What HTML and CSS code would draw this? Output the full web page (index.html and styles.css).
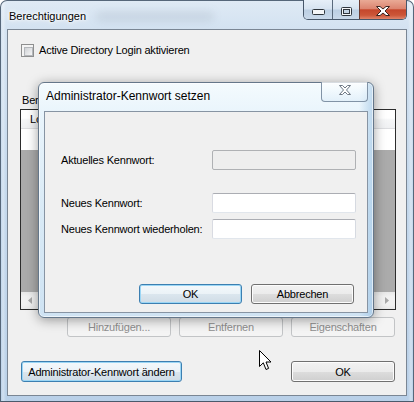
FILE: index.html
```html
<!DOCTYPE html>
<html lang="de">
<head>
<meta charset="utf-8">
<title>Berechtigungen</title>
<link rel="stylesheet" href="styles.css">
</head>
<body>
<div class="screen">
  <div class="window">
    <div class="titlebar">
      <span class="title">Berechtigungen</span>
      <span class="glass-blur"></span>
      <div class="caption">
        <div class="cbtn cbtn-min">
          <svg width="13" height="6" viewBox="0 0 13 6"><rect x="0.5" y="0.5" width="12" height="5" rx="1" fill="#f4f6f8" stroke="#2f363d"/></svg>
        </div>
        <div class="cbtn cbtn-max">
          <svg width="11" height="9" viewBox="0 0 11 9"><rect x="0.5" y="0.5" width="10" height="8" rx="1" fill="#f4f6f8" stroke="#2f363d"/><rect x="2.5" y="2.5" width="6" height="4" fill="#c3d3e4" stroke="#2f363d"/></svg>
        </div>
        <div class="cbtn cbtn-close">
          <svg width="14" height="10" viewBox="0 0 14 10"><polygon points="0.5,0.5 4,0.5 7,3 10,0.5 13.5,0.5 9,5 13.5,9.5 10,9.5 7,7 4,9.5 0.5,9.5 5,5" fill="#fff" stroke="#3b2520" stroke-linejoin="round"/></svg>
        </div>
      </div>
    </div>
    <div class="client">
      <div class="check-row">
        <span class="checkbox"></span>
        <span class="check-label">Active Directory Login aktivieren</span>
      </div>
      <div class="group-label">Berechtigungen:</div>
      <div class="listview">
        <div class="lv-header"><span>Login</span></div>
        <div class="lv-row"></div>
        <div class="lv-empty"></div>
        <div class="hscroll">
          <span class="sb-btn"><svg width="4" height="7" viewBox="0 0 4 7"><path d="M4 0 L0 3.5 L4 7 Z" fill="#a9a9a9"/></svg></span>
          <span class="sb-btn"><svg width="4" height="7" viewBox="0 0 4 7"><path d="M0 0 L4 3.5 L0 7 Z" fill="#a9a9a9"/></svg></span>
        </div>
      </div>
      <div class="button-row">
        <div class="btn btn-disabled">Hinzufügen...</div>
        <div class="btn btn-disabled">Entfernen</div>
        <div class="btn btn-disabled">Eigenschaften</div>
      </div>
      <div class="bottom-row">
        <div class="btn btn-default btn-wide">Administrator-Kennwort ändern</div>
        <div class="btn btn-main">OK</div>
      </div>
    </div>
  </div>

  <div class="dialog">
    <div class="dlg-titlebar">
      <span class="dlg-title">Administrator-Kennwort setzen</span>
      <div class="dlg-close">
        <svg width="12" height="10" viewBox="0 0 12 10"><polygon points="0.5,0.5 3.5,0.5 6,3 8.5,0.5 11.5,0.5 7.5,5 11.5,9.5 8.5,9.5 6,7 3.5,9.5 0.5,9.5 4.5,5" fill="#fff" stroke="#6e7884" stroke-linejoin="round"/></svg>
      </div>
    </div>
    <div class="dlg-client">
      <div class="form">
        <div class="form-row row-first">
          <span class="form-label">Aktuelles Kennwort:</span>
          <span class="field field-disabled"></span>
        </div>
        <div class="form-row row-second">
          <span class="form-label">Neues Kennwort:</span>
          <span class="field"></span>
        </div>
        <div class="form-row">
          <span class="form-label">Neues Kennwort wiederholen:</span>
          <span class="field"></span>
        </div>
      </div>
      <div class="dlg-buttons">
        <div class="btn btn-default btn-dlg">OK</div>
        <div class="btn btn-dlg">Abbrechen</div>
      </div>
    </div>
  </div>

  <svg class="cursor" width="13" height="21" viewBox="0 0 13 21"><polygon points="0.5,0.5 0.5,16.5 4.3,12.8 7,19.5 9.6,18.4 7,12 12,12" fill="#fff" stroke="#000" stroke-linejoin="round"/></svg>
</div>
</body>
</html>
```

FILE: styles.css
```css
* { box-sizing: border-box; }

html, body {
  margin: 0;
  padding: 0;
}

body {
  background: #ffffff;
  font-family: "Liberation Sans", Arial, sans-serif;
  font-size: 11px;
  letter-spacing: -0.2px;
  color: #000;
  overflow: hidden;
}

.screen {
  position: relative;
  width: 414px;
  height: 402px;
  overflow: hidden;
}

/* ---------- main window ---------- */
.window {
  width: 414px;
  height: 402px;
  border: 1px solid #56677a;
  border-bottom-color: #4a5a6b;
  border-radius: 7px 7px 0 0;
  padding: 0 6px 5px 6px;
  display: flex;
  flex-direction: column;
  background:
    linear-gradient(90deg, rgba(255,255,255,0) 0, rgba(255,255,255,.35) 2px, rgba(255,255,255,0) 5px),
    linear-gradient(270deg, rgba(255,255,255,0) 0, rgba(255,255,255,.35) 2px, rgba(255,255,255,0) 5px),
    linear-gradient(180deg, #dfeaf5 0, #d3e2f1 28px, #c4d8ec 45%, #b9d0e8 100%);
}

.titlebar {
  height: 28px;
  display: flex;
  align-items: flex-start;
  flex-shrink: 0;
}

.title {
  margin-top: 8px;
  padding-left: 2px;
  line-height: 14px;
  font-size: 11px;
  letter-spacing: 0;
  color: #000;
  text-shadow: 0 0 7px #fff, 0 0 4px #fff, 0 0 2px #fff;
}

.glass-blur {
  width: 118px;
  height: 9px;
  margin: 11px 0 0 10px;
  border-radius: 5px;
  background: rgba(80, 92, 108, .13);
  filter: blur(4px);
}

.caption {
  margin-left: auto;
  margin-top: -1px;
  display: flex;
  height: 20px;
  border: 1px solid #47576a;
  border-top: 0;
  border-radius: 0 0 5px 5px;
  overflow: hidden;
}

.cbtn {
  height: 19px;
  display: flex;
  justify-content: center;
}

.cbtn-min {
  width: 28px;
  align-items: flex-end;
  padding-bottom: 4px;
  background: linear-gradient(180deg, #e6eff8 0%, #d6e3f0 48%, #bccfe3 52%, #c9d9ea 100%);
}

.cbtn-max {
  width: 27px;
  border-left: 1px solid #5a6a7c;
  align-items: flex-start;
  padding-top: 7px;
  background: linear-gradient(180deg, #e6eff8 0%, #d6e3f0 48%, #bccfe3 52%, #c9d9ea 100%);
}

.cbtn-close {
  width: 47px;
  border-left: 1px solid #6b3a30;
  align-items: flex-start;
  padding-top: 6px;
  background: linear-gradient(180deg, #e9aa96 0%, #dc8570 45%, #c5472c 52%, #cc5638 80%, #e0846a 100%);
}

.client {
  height: 367px;
  flex-shrink: 0;
  border: 1px solid #7a8694;
  background: #f0f0f0;
  display: flex;
  flex-direction: column;
}

.check-row {
  display: flex;
  align-items: center;
  gap: 5px;
  height: 13px;
  margin: 14px 0 0 13px;
  line-height: 13px;
}

.checkbox {
  width: 13px;
  height: 13px;
  flex-shrink: 0;
  border: 1px solid #8e8f8f;
  background: #f4f4f4;
  padding: 2px;
}

.checkbox::before {
  content: "";
  display: block;
  width: 100%;
  height: 100%;
  border: 1px solid #b4b7bb;
  background: linear-gradient(135deg, #cfd2d6 0%, #e6e7e9 60%, #f6f6f6 100%);
}

.group-label {
  margin: 36px 0 0 14px;
  line-height: 14px;
}

.listview {
  width: 376px;
  height: 201px;
  margin: 2px 0 0 12px;
  border: 1px solid #2c2c2c;
  background: #fff;
  display: flex;
  flex-direction: column;
}

.lv-header {
  height: 19px;
  line-height: 18px;
  padding-left: 9px;
  border-bottom: 1px solid #dcdde0;
  background: linear-gradient(180deg, #ffffff 0%, #ffffff 45%, #f5f6f7 55%, #eff0f2 100%);
}

.lv-row {
  height: 21px;
  background: #fff;
}

.lv-empty {
  flex: 1;
  background: #ababab;
}

.hscroll {
  height: 17px;
  display: flex;
  justify-content: space-between;
  background: linear-gradient(180deg, #e7e7e7 0%, #f1f1f1 25%, #f1f1f1 75%, #e9e9e9 100%);
}

.sb-btn {
  width: 17px;
  height: 17px;
  display: flex;
  align-items: center;
  justify-content: center;
}

.button-row {
  display: flex;
  justify-content: flex-end;
  gap: 8px;
  margin: 7px 11px 0 0;
}

.bottom-row {
  display: flex;
  justify-content: space-between;
  margin: 24px 11px 0 13px;
}

/* ---------- buttons ---------- */
.btn {
  height: 21px;
  width: 104px;
  display: flex;
  align-items: center;
  justify-content: center;
  border: 1px solid #707070;
  border-radius: 3px;
  background: linear-gradient(180deg, #f2f2f2 0%, #ebebeb 50%, #dddddd 51%, #cfcfcf 100%);
  box-shadow: inset 0 0 0 1px #fcfcfc;
  white-space: nowrap;
}

.button-row .btn {
  height: 20px;
}

.btn-disabled {
  border-color: #c2c4c6;
  background: #f4f4f4;
  box-shadow: none;
  color: #8f8f8f;
}

.btn-default {
  border-color: #3c7fb1;
  background: linear-gradient(180deg, #f3f8fb 0%, #ebf2f7 50%, #dbe6ee 51%, #d0dce6 100%);
  box-shadow: inset 0 0 0 1px #9bd6f5;
}

.btn-wide {
  width: 161px;
}

.btn-dlg {
  width: 103px;
  height: 20px;
}

/* ---------- dialog ---------- */
.dialog {
  position: absolute;
  left: 38px;
  top: 82px;
  width: 336px;
  height: 236px;
  border: 1px solid #65778a;
  border-radius: 6px;
  padding: 0 5px 4px 5px;
  display: flex;
  flex-direction: column;
  background:
    linear-gradient(90deg, rgba(150,190,225,0) 0, rgba(150,190,225,0) 320px, rgba(130,178,220,.45) 334px),
    linear-gradient(180deg, #f4fbfe 0, #eaf5fc 28px, #d9eaf6 55%, #cfe3f3 100%);
  box-shadow: 0 2px 12px rgba(0, 0, 0, .38), inset 0 0 0 1px rgba(255,255,255,.6);
}

.dlg-titlebar {
  height: 28px;
  flex-shrink: 0;
  display: flex;
  align-items: flex-start;
}

.dlg-title {
  margin-top: 6px;
  padding-left: 2px;
  font-size: 12px;
  line-height: 15px;
  letter-spacing: 0;
  text-shadow: 0 0 5px #fff;
}

.dlg-close {
  margin-left: auto;
  margin-top: -1px;
  width: 47px;
  height: 20px;
  border: 1px solid #8193a6;
  border-top: 0;
  border-radius: 0 0 4px 4px;
  display: flex;
  justify-content: center;
  align-items: flex-start;
  padding-top: 3px;
  background: linear-gradient(180deg, rgba(255,255,255,.75) 0%, rgba(240,248,253,.6) 50%, rgba(220,236,248,.6) 100%);
}

.dlg-client {
  flex: 1;
  border: 1px solid #8794a3;
  background: #f0f0f0;
  display: flex;
  flex-direction: column;
}

.form {
  display: flex;
  flex-direction: column;
  margin: 38px 0 0 16px;
}

.form-row {
  display: flex;
  align-items: center;
  height: 20px;
}

.row-first {
  margin-bottom: 23px;
}

.row-second {
  margin-bottom: 6px;
}

.form-label {
  width: 151px;
  flex-shrink: 0;
}

.field {
  width: 144px;
  height: 20px;
  border: 1px solid;
  border-color: #abadb3 #d6dae1 #e1e6ec #d9dbe2;
  border-radius: 2px;
  background: #ffffff;
}

.field-disabled {
  border-color: #afb1b4;
  background: #eeeeee;
}

.dlg-buttons {
  display: flex;
  justify-content: flex-end;
  gap: 9px;
  margin: 45px 13px 0 0;
}

.cursor {
  position: absolute;
  left: 259px;
  top: 350px;
}
```
